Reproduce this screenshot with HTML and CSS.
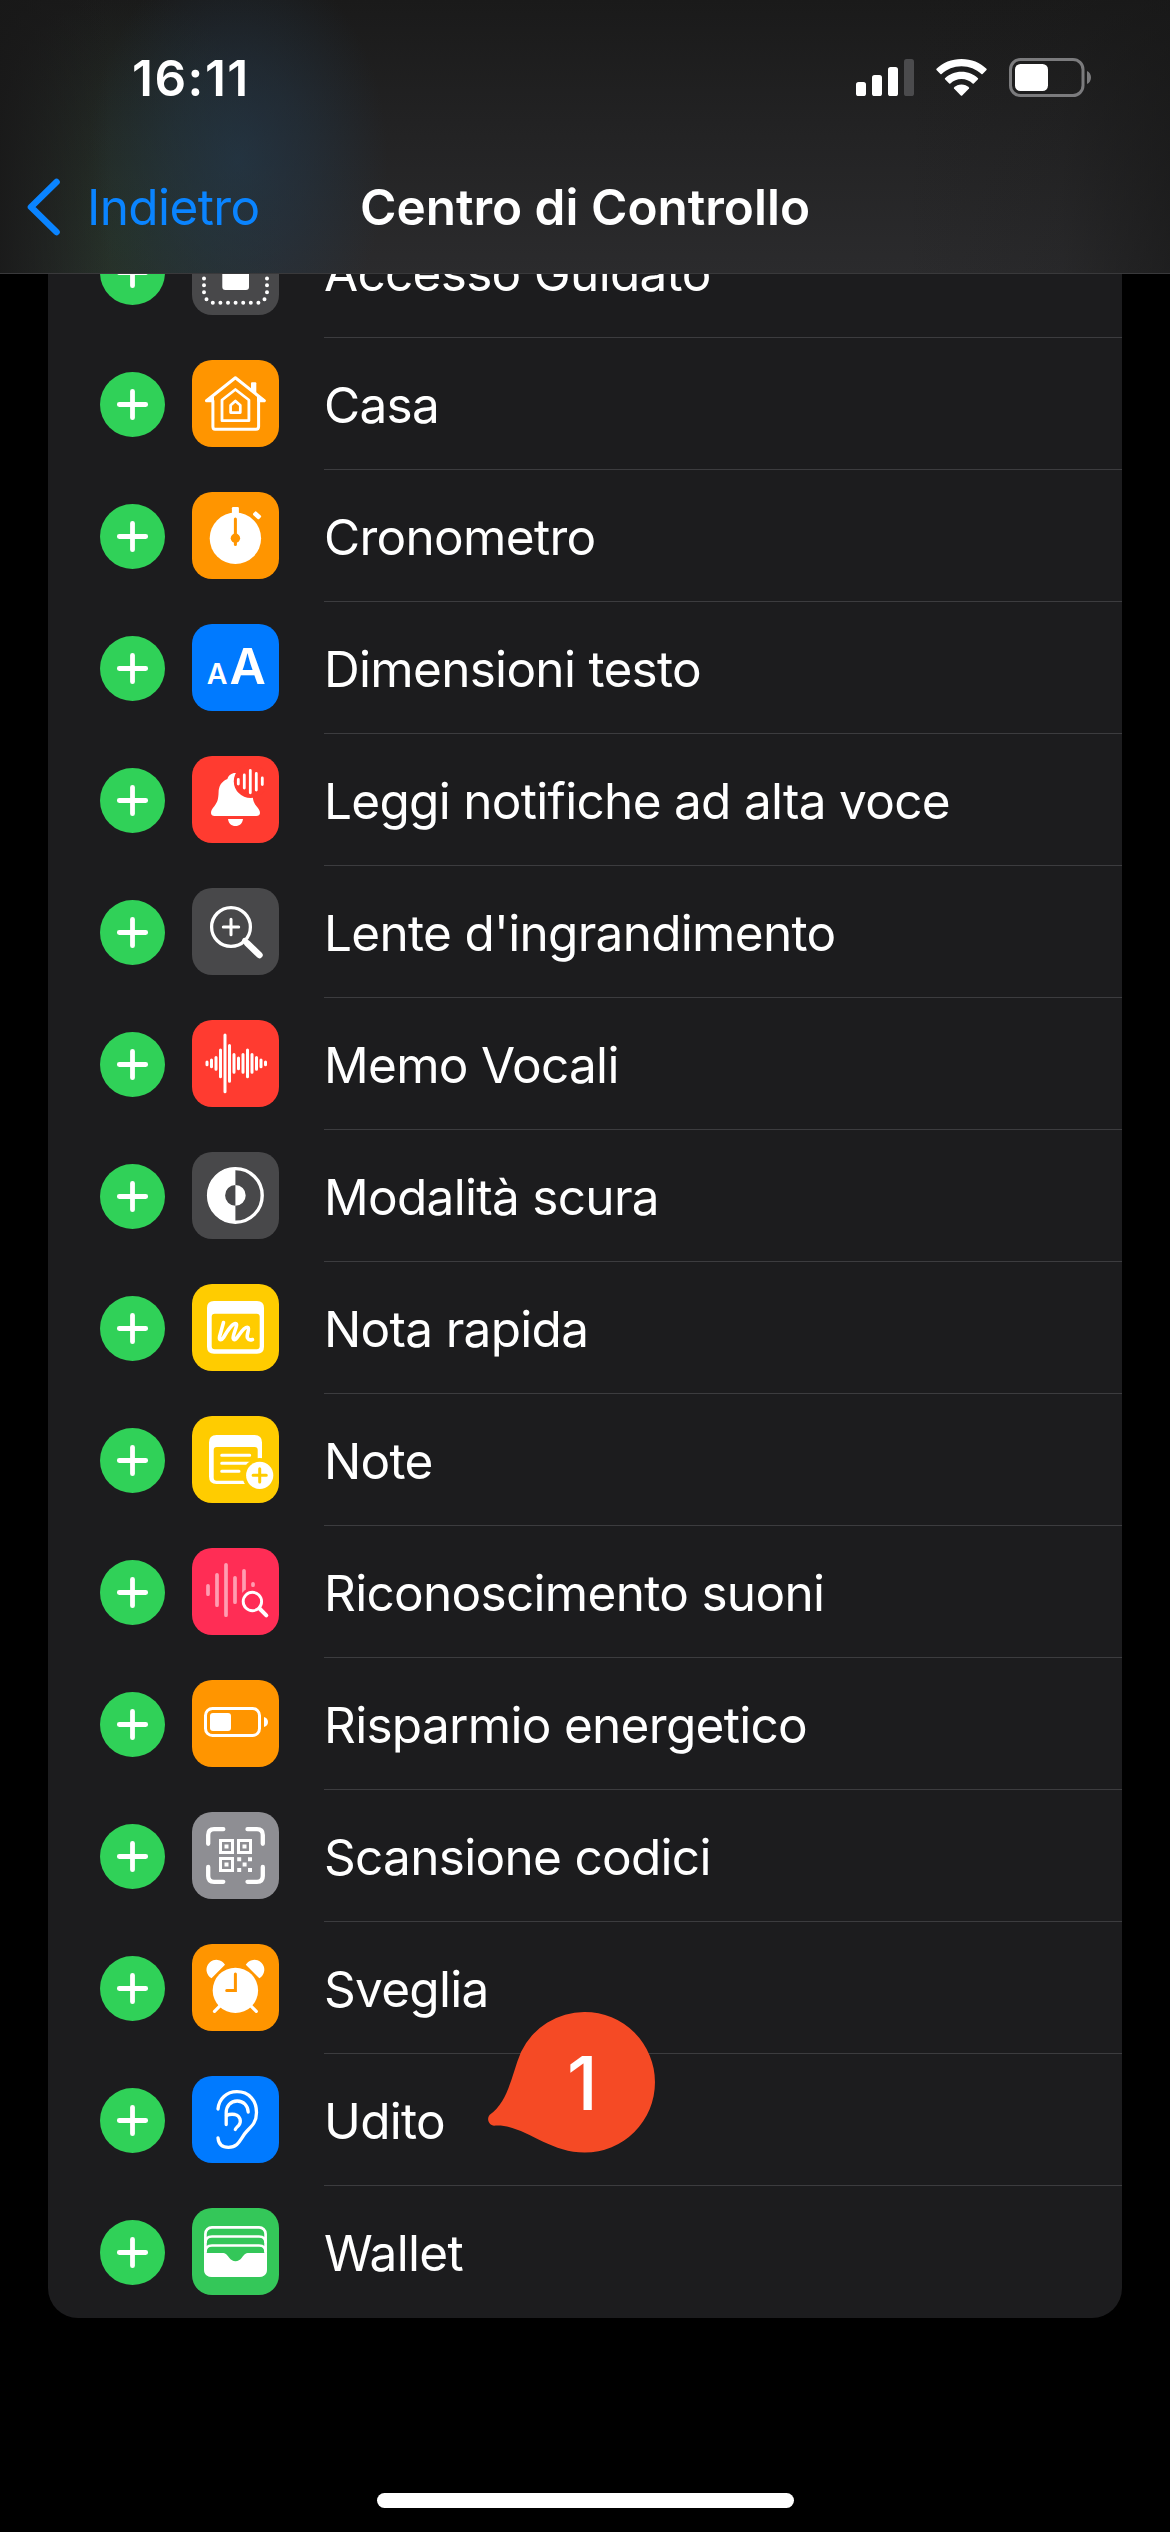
FILE: index.html
```html
<!DOCTYPE html>
<html lang="it">
<head>
<meta charset="utf-8">
<title>Centro di Controllo</title>
<link rel="stylesheet" href="styles.css">
</head>
<body>
<svg class="defs" width="0" height="0" aria-hidden="true">
  <symbol id="plus" viewBox="0 0 65 65"><circle cx="32.5" cy="32.5" r="32.5" fill="#30d158"/><path d="M32.5 19.3V45.7M19.3 32.5H45.7" stroke="#fff" stroke-width="4.8" stroke-linecap="round"/></symbol>
</svg>
<div class="screen">
  <header class="header">
    <div class="status">
      <span class="time">16:11</span>
      <div class="indicators">
        <svg width="58" height="37" viewBox="0 0 58 37" fill="#fff"><rect y="23" width="10" height="14" rx="2.6"/><rect x="16" y="16" width="10" height="21" rx="2.6"/><rect x="32" y="8" width="10" height="29" rx="2.6"/><rect x="48" width="10" height="37" rx="2.6" fill="#4b4b4d"/></svg>
        <svg class="wifi" width="51" height="37" viewBox="0 0 51 37" fill="#fff"><path d="M25.5 0C35.400 0 44.400 3.700 50.500 9.800Q51 10.400 50.500 11L46.600 15Q46 15.500 45.400 15C40 10.200 33.300 7.200 25.500 7.200S11 10.200 5.600 15Q5 15.500 4.400 15L.5 11Q0 10.400.5 9.800C6.600 3.700 15.600 0 25.500 0Z"/><path d="M25.500 12.800C32 12.800 37.800 15.200 42 19.300Q42.400 19.800 42 20.300L37.800 24.500Q37.200 25 36.600 24.500C33.500 21.700 29.800 20 25.500 20S17.500 21.700 14.400 24.500Q13.800 25 13.200 24.500L9 20.300Q8.600 19.800 9 19.300C13.200 15.200 19 12.800 25.500 12.800Z"/><path d="M25.500 25.500C28.500 25.500 31 26.700 33 28.600Q33.400 29.100 33 29.600L26.200 36.400Q25.500 37 24.800 36.400L18 29.600Q17.600 29.100 18 28.600C20 26.700 22.500 25.500 25.500 25.500Z"/></svg>
        <svg width="83" height="39" viewBox="0 0 83 39"><rect x="1.500" y="1.500" width="72.500" height="36" rx="10" fill="none" stroke="#7b7b7d" stroke-width="3"/><rect x="6" y="6" width="33" height="27" rx="5.500" fill="#fff"/><path d="M78 13C80.500 14.200 82 16.500 82 19.500S80.500 24.800 78 26Z" fill="#7b7b7d"/></svg>
      </div>
    </div>
    <nav class="nav">
      <a class="back"><svg width="35" height="58" viewBox="0 0 35 58"><path d="M30.500 4L5 29L30.500 54" fill="none" stroke="#0a84ff" stroke-width="6.600" stroke-linecap="round" stroke-linejoin="round"/></svg><span class="back-label">Indietro</span></a>
      <h1 class="title">Centro di Controllo</h1>
    </nav>
  </header>

  <main class="content">
    <ul class="list">
      <li class="row"><svg class="add"><use href="#plus"/></svg><span class="tile gray"><svg viewBox="0 0 87 87"><rect x="30.300" y="25" width="26.700" height="37" rx="3" fill="#fff"/><g fill="none" stroke="#fff" stroke-width="4" stroke-linecap="round"><path d="M20.800 74.700H67" stroke-dasharray="0 7.600"/><path d="M12 64.200V20M75 64.200V20" stroke-dasharray="0 6.900"/><path d="M14.500 71.200h0M72.500 71.200h0"/></g></svg></span><span class="label">Accesso Guidato</span></li>

      <li class="row"><svg class="add"><use href="#plus"/></svg><span class="tile orange"><svg viewBox="0 0 87 87" fill="none" stroke="#fff" stroke-width="3" stroke-linejoin="round"><path d="M59 29V23.200Q59 22.300 60 22.300H63.300Q64.300 22.300 64.300 23.200V34Z" fill="#fff" stroke="none"/><path d="M14.500 40.700L43.400 17.800L72.300 40.700H66.600V66.500Q66.600 69.200 64 69.200H23Q20.900 69.200 20.900 66.500V40.700Z"/><path d="M14.500 40.500L21 36V40.700ZM72.300 40.500L66 36V40.700Z" fill="#fff" stroke-width="2"/><path d="M43.400 29.500L56.900 40V60.700H30V40Z" stroke-width="2.800"/><path d="M43.400 41L48.300 45.300V52.600H38.600V45.300Z" stroke-width="2.700"/></svg></span><span class="label">Casa</span></li>

      <li class="row"><svg class="add"><use href="#plus"/></svg><span class="tile orange"><svg viewBox="0 0 87 87"><circle cx="43.400" cy="46.300" r="25.700" fill="#fff"/><rect x="39.900" y="15" width="7" height="10" rx="1.200" fill="#fff"/><rect x="61" y="21" width="8.200" height="4.600" rx="1.300" transform="rotate(42 65 23.300)" fill="#fff"/><path d="M43.400 27V52.500" stroke="#ff9500" stroke-width="3" stroke-linecap="round"/><circle cx="43.400" cy="46.300" r="4.700" fill="#ff9500"/></svg></span><span class="label">Cronometro</span></li>

      <li class="row"><svg class="add"><use href="#plus"/></svg><span class="tile blue"><svg viewBox="0 0 87 87" class="letters"><text x="14.800" y="60" font-size="28.500">A</text><text x="37.500" y="60" font-size="50">A</text></svg></span><span class="label">Dimensioni testo</span></li>

      <li class="row"><svg class="add"><use href="#plus"/></svg><span class="tile red"><svg viewBox="0 0 87 87"><path fill="#fff" d="M43.400 17C39.400 17 36.400 19.500 35.400 23C28.800 25.500 26.800 31 26.600 36C26.400 43 25.500 46 22.500 50C20 53 19 54.500 19 57C19 59 20.500 60 22.500 60H64.300C66.500 60 68 59 68 57C68 54.500 66.800 53 64.300 50C61.300 46 60.600 43 60.600 36C60 31 58 25.500 51.400 23C50.400 19.500 47.400 17 43.400 17ZM36 63H51C50.500 67.500 47.500 70 43.500 70S36.500 67.500 36 63Z"/><circle cx="58.600" cy="25.200" r="16.800" fill="#ff3b30"/><path d="M46.300 23.500V28M52.300 19V32M58.300 14.400V36.800M64.300 17.500V34M70.300 22V28.500" stroke="#fff" stroke-width="2.800" stroke-linecap="round"/></svg></span><span class="label">Leggi notifiche ad alta voce</span></li>

      <li class="row"><svg class="add"><use href="#plus"/></svg><span class="tile gray"><svg viewBox="0 0 87 87" fill="none" stroke="#fff" stroke-width="3.300" stroke-linecap="round"><circle cx="39" cy="39" r="19.400"/><path d="M39 31.300V46.700M31.300 39H46.700" stroke-width="3"/><path d="M52.500 52.500L56 56" stroke-width="5"/><path d="M55.500 55.500L67.400 67" stroke-width="6.600"/></svg></span><span class="label">Lente d'ingrandimento</span></li>

      <li class="row"><svg class="add"><use href="#plus"/></svg><span class="tile red"><svg viewBox="0 0 87 87" stroke="#fff" stroke-width="3" stroke-linecap="round"><path d="M15 42V44.800M19.500 40V46.800M24 37.500V49.300M28.500 30V56.700M33 15V71.700M37.500 25.500V61.200M42 34.500V52.200M46.500 38V48.700M51 34.500V52.200M55.500 30V56.700M60 34.500V52.200M64.500 37.500V49.300M69 40V46.800M73.500 42V44.800"/></svg></span><span class="label">Memo Vocali</span></li>

      <li class="row"><svg class="add"><use href="#plus"/></svg><span class="tile gray"><svg viewBox="0 0 87 87"><circle cx="43.400" cy="43.400" r="26.800" fill="none" stroke="#fff" stroke-width="3.400"/><path d="M43.400 15.500A27.900 27.900 0 0 0 43.400 71.300V53.700A10.300 10.300 0 0 1 43.400 33.100ZM43.400 33.100A10.300 10.300 0 0 1 43.400 53.700Z" fill="#fff"/></svg></span><span class="label">Modalità scura</span></li>

      <li class="row"><svg class="add"><use href="#plus"/></svg><span class="tile yellow"><svg viewBox="0 0 87 87"><path fill="#fff" fill-rule="evenodd" d="M22 17H65Q72 17 72 24V62.700Q72 69.700 65 69.700H22Q15 69.700 15 62.700V24Q15 17 22 17ZM22.700 29.700Q19.700 29.700 19.700 32.700V62.300Q19.700 65.300 22.700 65.300H64.700Q67.700 65.300 67.700 62.300V32.700Q67.700 29.700 64.700 29.700Z"/><path d="M31.500 38.500L27.600 52.500C26.800 57 29.500 56.500 31.500 53.500C35.500 46.500 41 39 43.500 39.500C47 40 40.500 50 41.200 54.500C42.200 57.500 45 54 47 51C50.500 46 54 42.500 56 43.500C58 45 54 51 55.500 54C56.500 56 59 56 60.500 55.500" fill="none" stroke="#fff" stroke-width="3.600" stroke-linecap="round" stroke-linejoin="round"/></svg></span><span class="label">Nota rapida</span></li>

      <li class="row"><svg class="add"><use href="#plus"/></svg><span class="tile yellow"><svg viewBox="0 0 87 87"><path fill="#fff" fill-rule="evenodd" d="M24.500 19H62.500Q70 19 70 26.500V60.500Q70 68 62.500 68H24.500Q17 68 17 60.500V26.500Q17 19 24.500 19ZM24.700 31Q21.700 31 21.700 34V61.700Q21.700 64.700 24.700 64.700H62.700Q65.700 64.700 65.700 61.700V34Q65.700 31 62.700 31Z"/><path d="M29.700 39.200H57.700M29.700 47.200H57.700M29.700 55.300H47" stroke="#fff" stroke-width="3" stroke-linecap="round"/><circle cx="67.700" cy="59.300" r="17.200" fill="#fc0"/><circle cx="67.700" cy="59.300" r="13.600" fill="#fff"/><path d="M67.700 52.700V65.900M61.100 59.300H74.300" stroke="#fc0" stroke-width="3" stroke-linecap="round"/></svg></span><span class="label">Note</span></li>

      <li class="row"><svg class="add"><use href="#plus"/></svg><span class="tile pink"><svg viewBox="0 0 87 87" fill="none" stroke-linecap="round"><path d="M16 37.800V46.200M25 26.800V57.200M34 16.800V67.200M43 29.800V54.200M52 22.800V48M61 35.800V37.200" stroke="#ff9db1" stroke-width="3.700"/><circle cx="60.400" cy="53.500" r="13.400" fill="#ff2d55"/><circle cx="60.400" cy="53.500" r="9.200" stroke="#fff" stroke-width="2.900"/><path d="M67.500 60.500L74.300 67.300" stroke="#fff" stroke-width="4"/></svg></span><span class="label">Riconoscimento suoni</span></li>

      <li class="row"><svg class="add"><use href="#plus"/></svg><span class="tile orange"><svg viewBox="0 0 87 87"><rect x="13.500" y="28.500" width="54" height="27" rx="7" fill="none" stroke="#fff" stroke-width="3"/><rect x="18" y="33" width="21" height="18" rx="3" fill="#fff"/><path d="M72 37C74.500 37.500 76 39.500 76 42S74.500 46.500 72 47Z" fill="#fff"/></svg></span><span class="label">Risparmio energetico</span></li>

      <li class="row"><svg class="add"><use href="#plus"/></svg><span class="tile silver"><svg viewBox="0 0 87 87" fill="#fff"><path d="M31.300 17.200H22Q16.200 17.200 16.200 23V31.800M55.500 17.200H65Q70.800 17.200 70.800 23V31.800M16.200 55V64Q16.200 69.800 22 69.800H31.300M70.800 55V64Q70.800 69.800 65 69.800H55.500" fill="none" stroke="#fff" stroke-width="4.300" stroke-linecap="round"/><path d="M28.500 28.500H40.500V40.500H28.500ZM46.500 28.500H58.500V40.500H46.500ZM28.500 46.500H40.500V58.500H28.500Z" fill="none" stroke="#fff" stroke-width="3"/><path d="M32.500 32.500h4v4h-4zM50.500 32.500h4v4h-4zM32.500 50.500h4v4h-4zM45.200 45.200h4v4h-4zM56 45.200h4v4h-4zM50.600 50.600h4v4h-4zM45.200 56h4v4h-4zM56 56h4v4h-4z"/></svg></span><span class="label">Scansione codici</span></li>

      <li class="row"><svg class="add"><use href="#plus"/></svg><span class="tile orange"><svg viewBox="0 0 87 87"><circle cx="43.400" cy="46.400" r="22.700" fill="#fff"/><path d="M19.500 34.300A9.900 9.900 0 1 1 33 20.800ZM67.300 34.300A9.900 9.900 0 1 0 53.800 20.800Z" fill="#fff"/><path d="M28 61.800L22.500 67.400M58.800 61.800L64.300 67.400" stroke="#fff" stroke-width="3.200" stroke-linecap="round"/><path d="M43.400 30V46.500H34.700" fill="none" stroke="#ff9500" stroke-width="3" stroke-linecap="round"/></svg></span><span class="label">Sveglia</span></li>

      <li class="row"><svg class="add"><use href="#plus"/></svg><span class="tile blue"><svg viewBox="0 0 87 87" fill="none" stroke="#fff" stroke-width="3.300" stroke-linecap="round" stroke-linejoin="round"><path d="M26 33C27 22.500 34.500 15.700 45 15.700C57 15.700 64.500 24.500 64.500 36.500C64.500 46 60 50 55 55C48.500 61.500 47.500 71.300 36.500 71.300C30 71.300 26.500 67.500 26 61.800"/><path d="M56.200 36C56 29.500 51.500 25 45.200 25C38.500 25 34.200 30 34.200 36.500V48.500"/><path d="M34.500 39.500C37 38.300 40 38 43 38.500C48.500 40 49.500 45.500 47 49C45.500 51 44 51.500 43.300 53.500"/></svg></span><span class="label">Udito</span></li>

      <li class="row"><svg class="add"><use href="#plus"/></svg><span class="tile green"><svg viewBox="0 0 87 87"><g fill="none" stroke="#fff" stroke-width="2.700"><rect x="13.400" y="19.400" width="60.200" height="48" rx="6.500"/><path d="M13.400 35Q13.400 28.500 20 28.500H67Q73.600 28.500 73.600 35M13.400 44Q13.400 37.500 20 37.500H67Q73.600 37.500 73.600 44"/></g><path d="M12 45H30C34 45 35 47 37 49.500C39 52 41 53.200 43.500 53.200S48 52 50 49.500C52 47 53 45 57 45H75V61Q75 69 67 69H20Q12 69 12 61Z" fill="#fff"/></svg></span><span class="label">Wallet</span></li>
    </ul>
  </main>

  <div class="marker"><svg width="168" height="141" viewBox="0 0 168 141"><path d="M97.700 0A70.300 70.300 0 0 1 97.700 140.600C60 140.600 35 111 7 113.700A6.700 6.700 0 0 1 2.500 103C22 89 24 64 34 40A70.300 70.300 0 0 1 97.700 0Z" fill="#f54a25"/></svg><span class="marker-number">1</span></div>
  <div class="home-indicator"></div>
</div>
</body>
</html>
```
FILE: styles.css
```css
* { box-sizing: border-box; }

body {
  margin: 0;
  background: #000;
  color: #fff;
  font-family: Inter, "Liberation Sans", sans-serif;
  font-size: 49.5px;
}

.defs { display: block; }

.screen {
  position: relative;
  display: flex;
  flex-direction: column;
  width: 1170px;
  height: 2532px;
  overflow: hidden;
}

.header {
  display: flex;
  flex-direction: column;
  flex: none;
  height: 274px;
  border-bottom: 1px solid #39393b;
  background:
    linear-gradient(90deg, rgba(24, 24, 24, .85) 0, rgba(24, 24, 24, 0) 110px, rgba(24, 24, 24, 0) 900px, rgba(24, 24, 24, .15) 1060px, rgba(24, 24, 24, .65) 1170px),
    radial-gradient(ellipse 150px 210px at 238px 160px, rgba(35, 58, 78, .65), rgba(35, 58, 78, .4) 45%, rgba(35, 58, 78, 0)),
    radial-gradient(ellipse 160px 250px at 125px 240px, rgba(34, 58, 38, .5), rgba(34, 58, 38, 0)),
    linear-gradient(#1a1a1a, #232324 50%, #2b2b2d);
}

.status {
  display: flex;
  justify-content: space-between;
  align-items: center;
  height: 141px;
  padding: 14px 78px 0 132px;
}

.time { font-weight: 600; letter-spacing: 1.5px; }

.indicators { display: flex; align-items: center; }
.indicators .wifi { margin: 0 22px; }

.nav {
  display: grid;
  grid-template-columns: 1fr auto 1fr;
  align-items: center;
  height: 132px;
}

.back {
  display: flex;
  align-items: center;
  gap: 26px;
  padding-left: 26px;
  color: #0a84ff;
}

.back-label { letter-spacing: -.6px; }

.title {
  margin: 0;
  font-size: 49.5px;
  font-weight: 600;
  letter-spacing: 0;
}

.content {
  flex: 1;
  overflow: hidden;
  padding: 0 48px;
}

.list {
  margin: -68px 0 0;
  padding: 0;
  list-style: none;
  background: #1c1c1e;
  border-radius: 30px;
}

.row {
  display: flex;
  align-items: center;
  height: 132px;
  padding-left: 52px;
}

.add { flex: none; width: 65px; height: 65px; margin: 1px 27px 0 0; }

.tile {
  flex: none;
  width: 87px;
  height: 87px;
  margin: 0 45px 1px 0;
  border-radius: 20px;
}

.tile svg { display: block; width: 87px; height: 87px; }

.orange { background: #ff9500; }
.blue { background: #007aff; }
.red { background: #ff3b30; }
.gray { background: #48484a; }
.yellow { background: #fc0; }
.pink { background: #ff2d55; }
.silver { background: #8e8e93; }
.green { background: #34c759; }

.letters { fill: #fff; font-weight: 600; }

.label {
  flex: 1;
  height: 132px;
  border-bottom: 1px solid #3c3c3f;
  line-height: 134px;
  letter-spacing: -.7px;
  white-space: nowrap;
}

.row:last-child .label { border-bottom: 0; }

.marker {
  position: absolute;
  left: 487px;
  top: 2012px;
  width: 168px;
  height: 141px;
}

.marker svg { display: block; }

.marker-number {
  position: absolute;
  left: 80px;
  top: 26px;
  font-size: 74px;
  font-weight: 500;
  line-height: 90px;
}

.home-indicator {
  flex: none;
  width: 417px;
  height: 15px;
  margin: 0 auto 24px;
  border-radius: 8px;
  background: #fff;
}
```
